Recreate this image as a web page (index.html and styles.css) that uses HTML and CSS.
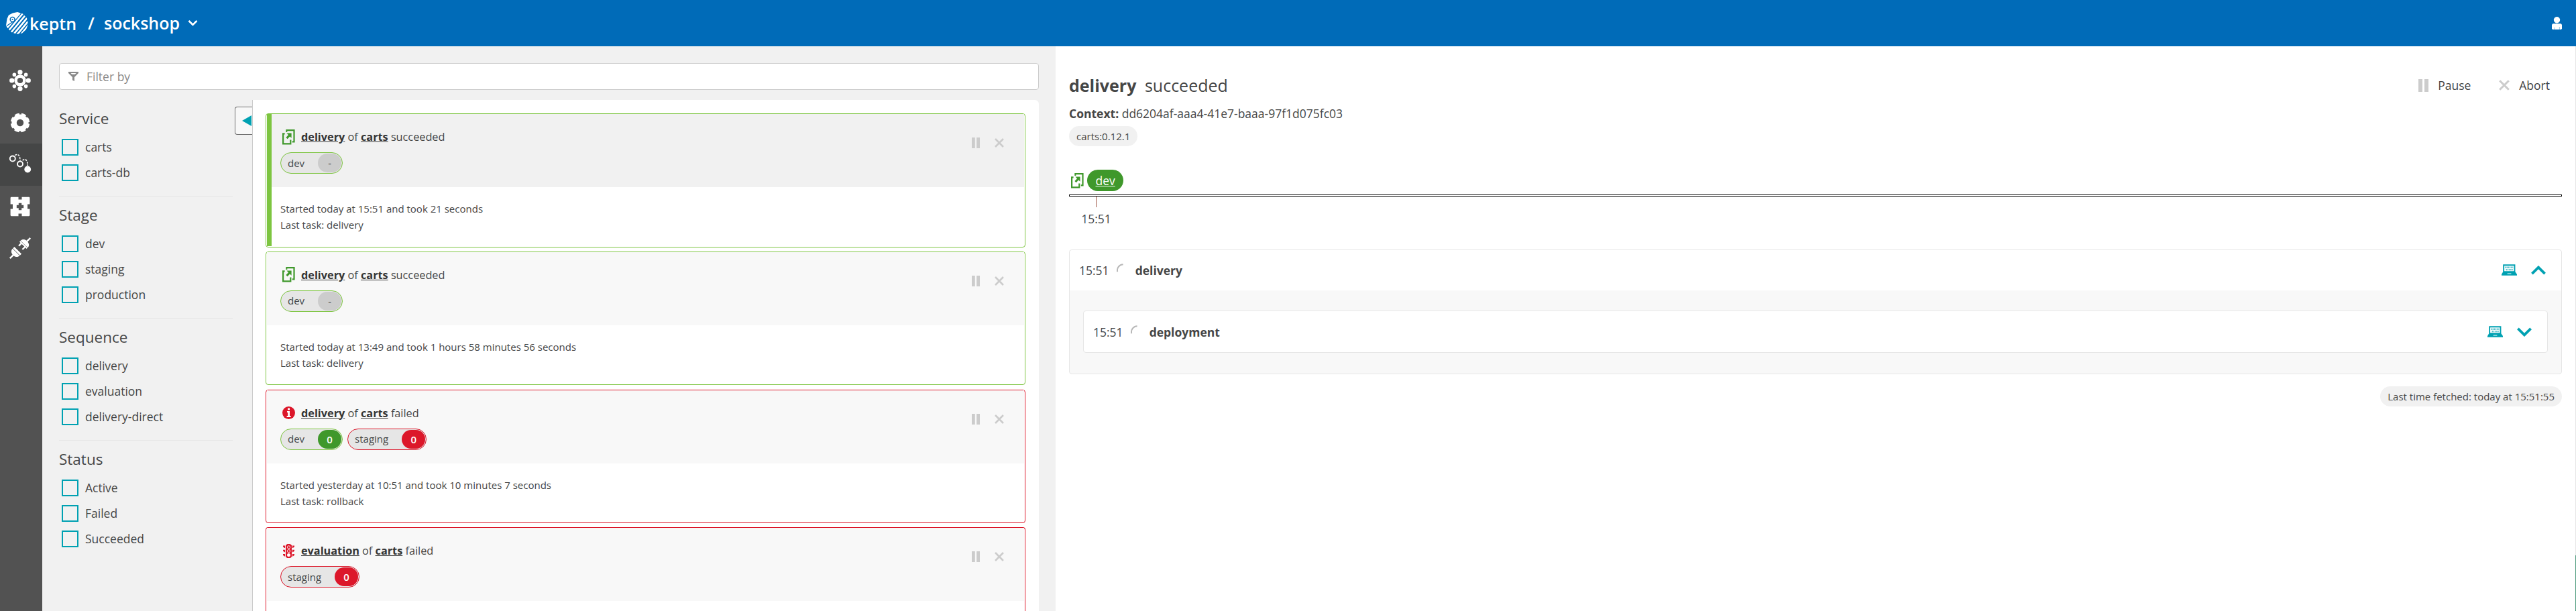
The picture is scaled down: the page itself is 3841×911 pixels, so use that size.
FILE: index.html
```html
<!DOCTYPE html>
<html lang="en">
<head>
<meta charset="utf-8">
<title>keptn - sockshop</title>
<link rel="stylesheet" href="styles.css">
</head>
<body>
<svg class="defs" aria-hidden="true">
  <symbol id="i-deploy" viewBox="0 0 19 23">
    <path d="M5.3 0H18.6V19.4H14.8V17.2H16.4V2.2H7.3V4H5.3Z"/>
    <path d="M0 5.2H3.6V7.4H2.2V20.2H11.2V15.4H13.4V22.4H0Z"/>
    <path d="M6.4 5.4H13.6V12.8L11.2 10.4L7.6 14.2L5.4 12L9 8.2Z"/>
  </symbol>
  <symbol id="i-pause" viewBox="0 0 12 16"><path d="M0 0H4.8V16H0ZM7.2 0H12V16H7.2Z"/></symbol>
  <symbol id="i-abort" viewBox="0 0 16 16"><path d="M1.2 1.2L14.8 14.8M14.8 1.2L1.2 14.8" fill="none" stroke="currentColor" stroke-width="3"/></symbol>
  <symbol id="i-laptop" viewBox="0 0 24 17">
    <path fill-rule="evenodd" d="M2.3 0H21.3V11.5L24 15.4V17H0V15.4L2.3 11.5ZM4.3 2V10.2H19.3V2ZM9 13.6V14.8H15V13.6Z"/>
    <path d="M5.5 4.6H18M6.8 8.2H17.5" fill="none" stroke="currentColor" stroke-width="2.4" stroke-dasharray="1.6 .7" opacity=".65"/>
  </symbol>
  <symbol id="i-spin" viewBox="0 0 12 14"><path d="M1.2 12.2A9 9 0 0 1 9.6 1.2" fill="none" stroke="#b7b7b7" stroke-width="2"/></symbol>
  <symbol id="i-chevron" viewBox="0 0 22 14"><path d="M1.4 12.2L11 2.6L20.6 12.2" fill="none" stroke="currentColor" stroke-width="3.8"/></symbol>
</svg>

<header class="topbar">
  <svg class="logo" viewBox="0 0 33 33">
    <defs><clipPath id="logo-clip"><path d="M10 1.5L17 0L25 2.6L31 9L33 18L30 26L24 31.5L16 33L8 30L2 23.5L0 20L1.5 10L4 4.5Z"/></clipPath></defs>
    <g clip-path="url(#logo-clip)">
      <path d="M0 0H19L22 2L2 25L0 22Z" fill="#fff"/>
      <path d="M3.5 28L25.5 1.5M7 31L29 4.5M10.5 34L32 8M15 35.5L34 12.5M20 36L35 18M25.5 36L36 23" fill="none" stroke="#fff" stroke-width="2.7"/>
      <path d="M1 20.5L12.5 13" fill="none" stroke="#006bb8" stroke-width="1.3"/>
    </g>
    <circle cx="9.6" cy="11" r="3.4" fill="#fff" stroke="#006bb8" stroke-width="1.5"/>
    <circle cx="9.6" cy="11" r="1.1" fill="#006bb8"/>
  </svg>
  <span class="brand">keptn</span>
  <span class="slash">/</span>
  <span class="project">sockshop</span>
  <svg class="caret" viewBox="0 0 15 11"><path d="M1.5 2L7.5 8L13.5 2" fill="none" stroke="#fff" stroke-width="2.6"/></svg>
  <svg class="user" viewBox="0 0 15 19"><circle cx="7.5" cy="4.8" r="4.7"/><path d="M1.5 10.3H13.5L15 11.8V17.5L14 19H1L0 17.5V11.8Z"/><path d="M3.6 16V19M11.4 15V19" stroke="#7db4da" stroke-width=".7"/></svg>
</header>

<div class="shell">
  <nav class="rail">
    <a class="rail-item"><svg viewBox="0 0 32 32">
      <circle cx="16" cy="16" r="6.4" fill="none" stroke="#fff" stroke-width="4.6"/>
      <path d="M16 7V3M16 25V29M7 16H3M25 16H29M8.5 8.5L6.5 6.5M23.5 8.5L25.5 6.5M8.5 23.5L6.5 25.5M23.5 23.5L25.5 25.5" stroke="#fff" stroke-width="1.8"/>
      <circle cx="16" cy="3.7" r="3.6"/><circle cx="16" cy="28.3" r="3.6"/><circle cx="3.7" cy="16" r="3.6"/><circle cx="28.3" cy="16" r="3.6"/>
      <circle cx="7.4" cy="7.4" r="2.8"/><circle cx="24.6" cy="7.4" r="2.8"/><circle cx="7.4" cy="24.6" r="2.8"/><circle cx="24.6" cy="24.6" r="2.8"/>
    </svg></a>
    <a class="rail-item"><svg viewBox="0 0 32 32">
      <circle cx="16" cy="16" r="8.9" fill="none" stroke="#fff" stroke-width="7.4"/>
      <circle cx="16" cy="16" r="12.2" fill="none" stroke="#fff" stroke-width="4.2" stroke-dasharray="6.6 2.98" stroke-dashoffset="-1.5"/>
    </svg></a>
    <a class="rail-item rail-item-active"><svg viewBox="0 0 32 32">
      <g fill="none" stroke="#fff"><circle cx="4.8" cy="7.5" r="4" stroke-width="1.9"/><circle cx="16" cy="15.5" r="4" stroke-width="1.9"/>
      <path d="M8.5 2.5C12 .2 16 1.5 16 10.5M19.6 10.2C23 7.2 27.2 8.5 27.2 18" stroke-width="1.6" stroke-dasharray="3 1.4"/></g>
      <circle cx="27.2" cy="23.5" r="4.9"/>
    </svg></a>
    <a class="rail-item"><svg viewBox="0 0 32 32">
      <path fill-rule="evenodd" d="M3 1.8H13.5V5.4H18.5V1.8H29Q30.4 1.8 30.4 3.2V12.6H27V19.4H30.4V28.8Q30.4 30.2 29 30.2H18.5V26.6H13.5V30.2H3Q1.6 30.2 1.6 28.8V19.4H5V12.6H1.6V3.2Q1.6 1.8 3 1.8ZM13.8 10.8V13.8H10.8V18.2H13.8V21.2H18.2V18.2H21.2V13.8H18.2V10.8Z"/>
    </svg></a>
    <a class="rail-item"><svg viewBox="0 0 32 32">
      <g transform="rotate(45 16 16)">
        <path d="M8.5 7.5C8.5 -1 23.5 -1 23.5 7.5Z"/><rect x="14.8" y="-5.5" width="2.4" height="8"/><rect x="8.5" y="7.9" width="15" height="2"/><rect x="11" y="9" width="2.4" height="6"/><rect x="18.6" y="9" width="2.4" height="6"/>
        <path d="M8.5 24.5C8.5 33 23.5 33 23.5 24.5Z"/><rect x="14.8" y="29.5" width="2.4" height="8"/><rect x="8.5" y="20.6" width="15" height="3.2"/>
      </g>
    </svg></a>
  </nav>

  <section class="browse">
    <div class="filter">
      <svg viewBox="0 0 15 14"><path fill-rule="evenodd" d="M0 0H15V2L9 8V14L6 12.6V8L0 2ZM3.5 2L5.2 3.7H9.8L11.5 2Z"/></svg>
      <span>Filter by</span>
    </div>
    <div class="browse-body">
      <aside class="facets">
        <div class="group"><h2>Service</h2>
          <label><i></i>carts</label><label><i></i>carts-db</label></div>
        <div class="group"><h2>Stage</h2>
          <label><i></i>dev</label><label><i></i>staging</label><label><i></i>production</label></div>
        <div class="group"><h2>Sequence</h2>
          <label><i></i>delivery</label><label><i></i>evaluation</label><label><i></i>delivery-direct</label></div>
        <div class="group"><h2>Status</h2>
          <label><i></i>Active</label><label><i></i>Failed</label><label><i></i>Succeeded</label></div>
      </aside>
      <div class="toggle"><svg viewBox="0 0 14 16"><path d="M14 0V16L0 8Z"/></svg></div>
      <div class="list">
        <article class="tile ok selected">
          <div class="tile-head">
            <div class="tile-title"><svg class="t-deploy"><use href="#i-deploy"/></svg><p><b>delivery</b> of <b>carts</b> succeeded</p></div>
            <div class="tags"><span class="tag tag-ok">dev<em class="none">-</em></span></div>
            <div class="actions"><svg class="a-pause"><use href="#i-pause"/></svg><svg class="a-abort"><use href="#i-abort"/></svg></div>
          </div>
          <div class="tile-body">Started today at 15:51 and took 21 seconds<br>Last task: delivery</div>
        </article>
        <article class="tile ok">
          <div class="tile-head">
            <div class="tile-title"><svg class="t-deploy"><use href="#i-deploy"/></svg><p><b>delivery</b> of <b>carts</b> succeeded</p></div>
            <div class="tags"><span class="tag tag-ok">dev<em class="none">-</em></span></div>
            <div class="actions"><svg class="a-pause"><use href="#i-pause"/></svg><svg class="a-abort"><use href="#i-abort"/></svg></div>
          </div>
          <div class="tile-body">Started today at 13:49 and took 1 hours 58 minutes 56 seconds<br>Last task: delivery</div>
        </article>
        <article class="tile bad">
          <div class="tile-head">
            <div class="tile-title"><svg class="t-info" viewBox="0 0 19 19"><circle cx="9.5" cy="9.5" r="9.5"/><path fill="#fff" d="M8 2.6H11V5.3H8ZM7 7H11V14H12.6V16H6.6V14H8.2V9H7Z"/></svg><p><b>delivery</b> of <b>carts</b> failed</p></div>
            <div class="tags"><span class="tag tag-ok">dev<em class="pass">0</em></span><span class="tag tag-bad">staging<em class="fail">0</em></span></div>
            <div class="actions"><svg class="a-pause"><use href="#i-pause"/></svg><svg class="a-abort"><use href="#i-abort"/></svg></div>
          </div>
          <div class="tile-body">Started yesterday at 10:51 and took 10 minutes 7 seconds<br>Last task: rollback</div>
        </article>
        <article class="tile bad tile-cut">
          <div class="tile-head">
            <div class="tile-title"><svg class="t-light" viewBox="0 0 17 21"><path d="M6.5 0H10.5L13 2V19L11 21H6L4 19V2ZM0 2.5H3.1V6H2.2L0 4.2ZM0 8.8H3.1V12.3H2.2L0 10.5ZM0 15H3.1V18.5H2.2L0 16.7ZM17 2.5H13.9V6H14.8L17 4.2ZM17 8.8H13.9V12.3H14.8L17 10.5ZM17 15H13.9V18.5H14.8L17 16.7Z"/><g fill="none" stroke="#fff" stroke-width=".9"><circle cx="8.5" cy="4.9" r="2.1"/><circle cx="8.5" cy="10.6" r="2.1"/></g><circle cx="8.5" cy="16.4" r="2.5" fill="#fff"/></svg><p><b>evaluation</b> of <b>carts</b> failed</p></div>
            <div class="tags"><span class="tag tag-bad">staging<em class="fail">0</em></span></div>
            <div class="actions"><svg class="a-pause"><use href="#i-pause"/></svg><svg class="a-abort"><use href="#i-abort"/></svg></div>
          </div>
        </article>
      </div>
    </div>
  </section>

  <main class="detail">
    <div class="detail-head">
      <h1>delivery <span>succeeded</span></h1>
      <div class="controls">
        <svg class="c-pause" viewBox="0 0 15 19"><path d="M0 0H6V19H0ZM9 0H15V19H9Z"/></svg><span class="c-label">Pause</span>
        <svg class="c-abort"><use href="#i-abort"/></svg><span>Abort</span>
      </div>
    </div>
    <p class="context"><b>Context:</b> dd6204af-aaa4-41e7-baaa-97f1d075fc03</p>
    <span class="chip">carts:0.12.1</span>
    <div class="stages"><svg><use href="#i-deploy"/></svg><a>dev</a></div>
    <div class="timeline"></div>
    <div class="tick-group"><i></i><span>15:51</span></div>
    <div class="task">
      <div class="task-head"><span>15:51</span><svg class="spin"><use href="#i-spin"/></svg><b>delivery</b><svg class="laptop"><use href="#i-laptop"/></svg><svg class="chev"><use href="#i-chevron"/></svg></div>
      <div class="task-body">
        <div class="subtask"><span>15:51</span><svg class="spin"><use href="#i-spin"/></svg><b>deployment</b><svg class="laptop"><use href="#i-laptop"/></svg><svg class="chev down"><use href="#i-chevron"/></svg></div>
      </div>
    </div>
    <span class="chip fetched">Last time fetched: today at 15:51:55</span>
  </main>
  <div class="edge"></div>
</div>
</body>
</html>
```
FILE: styles.css
```css
* { box-sizing: border-box; }
body { margin: 0; width: 3841px; height: 911px; overflow: hidden; background: #fff; color: #454646; font: 17.5px/24px "Open Sans", sans-serif; display: flex; flex-direction: column; }
h1, h2, p { margin: 0; font-weight: 400; }
svg { flex: none; fill: currentColor; display: block; overflow: visible; }
.defs { display: none; }

.topbar { flex: none; height: 69px; background: #006bb8; color: #fff; display: flex; align-items: center; padding: 0 21px 1px 9px; font-size: 25px; line-height: 34px; font-weight: 600; }
.logo { width: 33px; height: 33px; }
.brand { margin: 2px 0 0 2px; width: 87px; }
.slash { width: 23px; }
.project { margin-left: 1px; }
.caret { width: 15px; height: 11px; margin-left: 12px; }
.user { width: 15px; height: 19px; margin-left: auto; }

.shell { flex: 1; min-height: 0; display: flex; }
.rail { flex: none; width: 63px; background: #525252; color: #fff; padding-top: 20px; }
.rail-item { height: 62.5px; display: flex; align-items: center; padding-left: 14px; }
.rail-item svg { width: 32px; height: 32px; }
.rail-item-active { background: #454646; }

.browse { flex: none; width: 1511px; background: #f1f1f1; padding: 25px 25px 0; display: flex; flex-direction: column; }
.filter { flex: none; height: 40px; border: 1px solid #ccc; border-radius: 4px; background: #fff; display: flex; align-items: center; padding-left: 13px; color: #898989; }
.filter svg { width: 15px; height: 14px; margin-right: 12px; }
.browse-body { flex: 1; min-height: 0; margin-top: 15px; display: flex; }
.facets { flex: none; width: 262px; }
.group { width: 259px; padding: 12.3px 0 15.5px; border-bottom: 1px solid #e6e6e6; }
.group:first-child { padding-top: 12px; }
.group:last-child { border: 0; }
.group h2 { font-size: 22.5px; line-height: 31px; margin-bottom: 8.2px; }
.group label { height: 38px; display: flex; align-items: center; padding-left: 4px; }
.group i { width: 25px; height: 25px; border: 2px solid #00a1b2; margin-right: 10px; }
.toggle { flex: none; width: 26px; height: 42px; margin-top: 10px; border: 1px solid #6d6d6d; border-right: 0; border-radius: 4px 0 0 4px; background: #f8f8f8; display: flex; align-items: center; justify-content: flex-end; padding-right: 1px; color: #00a1b2; }
.toggle svg { width: 14px; height: 16px; }
.list { flex: 1; min-width: 0; border-left: 1px solid #ccc; border-radius: 0 6px 0 0; background: #fff; padding: 20px 20px 0 19px; display: flex; flex-direction: column; }

.tile { flex: none; height: 199.5px; margin-bottom: 6.25px; border: 1px solid; border-radius: 4px; padding: 0 1px 1px; display: flex; flex-direction: column; }
.ok { border-color: #7dc540; }
.bad { border-color: #dc172a; }
.tile-cut { flex: 1; height: auto; margin: 0; border-bottom: 0; border-radius: 4px 4px 0 0; }
.tile-head { position: relative; flex: none; height: 109px; background: #f8f8f8; padding: 19px 0 0 20px; font-size: 16.25px; }
.selected { background: linear-gradient(90deg, transparent 1px, #7dc540 1px, #7dc540 8px, transparent 8px) no-repeat 0 0 / 8px 197px; }
.selected .tile-head { background: #f1f1f1; margin-left: 7px; padding-left: 13px; }
.tile-title { display: flex; align-items: center; height: 30px; padding-left: 3px; }
.tile-title svg { margin-right: 9px; }
.tile-title b { font-weight: 700; color: #353535; text-decoration: underline; }
.t-deploy { width: 19px; height: 23px; color: #3f982b; }
.t-info { width: 19px; height: 19px; color: #dc172a; }
.tile-title .t-light { width: 17px; height: 21px; margin: 0 10px 0 1px; color: #dc172a; }
.tags { display: flex; gap: 7px; margin-top: 8px; }
.tag { height: 32px; border: 1px solid #7dc540; border-radius: 16px; background: #e6e6e6; padding: 1px 1px 1px 10px; font-size: 15px; line-height: 29px; display: flex; align-items: center; gap: 20px; }
.tag-bad { border-color: #dc172a; }
.tag em { width: 35px; height: 28px; border-radius: 14px; font-style: normal; line-height: 28px; text-align: center; }
.none { background: #ccc; }
.pass { background: #3f982b; color: #fff; font-weight: 600; }
.fail { background: #dc172a; color: #fff; font-weight: 600; }
.actions { position: absolute; right: 30px; top: 35px; display: flex; align-items: center; gap: 22px; color: #ccc; }
.a-pause { width: 12px; height: 16px; }
.a-abort { width: 14px; height: 14px; }
.tile-body { padding: 20px 0 0 20px; font-size: 15px; line-height: 24px; }

.detail { flex: 1; min-width: 0; padding: 41px 20px 0; display: flex; flex-direction: column; align-items: flex-start; }
.detail-head { align-self: stretch; display: flex; align-items: center; height: 34px; }
h1 { font-size: 25px; line-height: 34px; font-weight: 700; }
h1 span { font-weight: 400; margin-left: 6px; }
.controls { margin-left: auto; display: flex; align-items: center; padding-right: 18px; }
.controls svg { color: #ccc; }
.c-pause { width: 15px; height: 19px; margin-right: 14px; }
.c-label { width: 91px; }
.c-abort { width: 16px; height: 16px; margin-right: 14px; }
.context { margin-top: 13px; }
.chip { margin-top: 7px; height: 30px; border-radius: 15px; background: #f1f1f1; padding: 0 11px; font-size: 15px; line-height: 30px; }
.stages { margin-top: 35px; height: 32px; display: flex; align-items: center; padding-left: 3px; }
.stages svg { width: 19px; height: 23px; margin-right: 5px; color: #3f982b; }
.stages a { height: 32px; border-radius: 16px; background: #3f982b; color: #fff; padding: 0 12.5px; line-height: 32px; text-decoration: underline; }
.timeline { align-self: stretch; height: 3px; border: 1px solid #000; margin-top: 5px; }
.tick-group { width: 81px; height: 79px; display: flex; flex-direction: column; align-items: center; }
.tick-group i { width: 1px; height: 16px; background: #a05a4a; }
.tick-group span { margin-top: 5px; }
.task { align-self: stretch; border: 1px solid #e6e6e6; border-radius: 4px; background: #f8f8f8; }
.task-head { height: 60px; background: #fff; border-radius: 4px 4px 0 0; display: flex; align-items: center; padding: 0 23px 0 14px; }
.spin { width: 12px; height: 14px; margin: -6px 16px 0 11px; }
.laptop { width: 23px; height: 17px; margin: -1px 21px 0 auto; color: #00a1b2; }
.chev { width: 22px; height: 14px; color: #00a1b2; }
.down { transform: scaleY(-1); }
.task-body { padding: 30px 20px 31px; }
.subtask { height: 63px; border: 1px solid #e6e6e6; border-radius: 4px; background: #fff; display: flex; align-items: center; padding: 0 23px 0 14px; }
.fetched { align-self: flex-end; margin-top: 18px; }
.edge { flex: none; width: 1px; background: linear-gradient(#e6e6e6 759px, #4e9a7c 759px); }
```
